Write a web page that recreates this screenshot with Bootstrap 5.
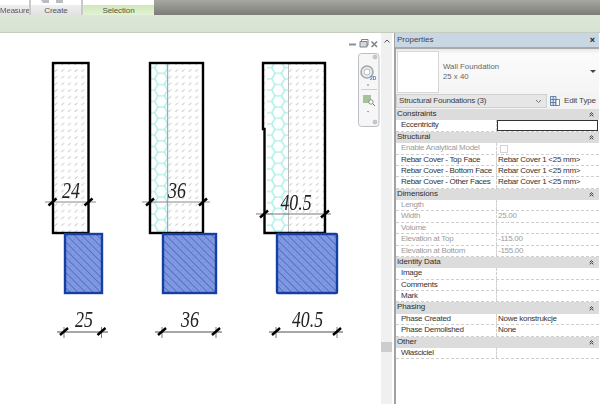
<!DOCTYPE html>
<html lang="en">
<head>
<meta charset="utf-8">
<title>Wall Foundation</title>
<link href="https://cdn.jsdelivr.net/npm/bootstrap@5.3.0/dist/css/bootstrap.min.css" rel="stylesheet">
<style>
html,body{width:600px;height:404px;overflow:hidden;background:#fff}
body{font:8px/1 "Liberation Sans",Arial,sans-serif;color:#333}
.shot{width:600px;height:404px;filter:blur(.3px)}
.ribbon{height:15px;background:linear-gradient(#a8a8a2,#7c7d77)}
.rtab{position:relative;height:15px;background:linear-gradient(#fff 0,#fff 5px,#eeeeee 5px,#e2e2e2 100%);border-right:2px solid #c9c9c9;color:#555;font-size:8px;padding-top:7px;text-align:center;letter-spacing:-.1px}
.rtab-m{width:31px;white-space:nowrap;overflow:hidden;font-size:7.8px}
.rtab-c{width:52px}
.rtab-s{width:71px;background:linear-gradient(#fff 0,#fff 5px,#cfe8b8 5px,#e4f2d6 100%);border-right:0;color:#4c5a44}
.rglyph{position:absolute;left:9px;top:0}
.band{height:18px;background:linear-gradient(#dde7d8,#d8e2d2);border-bottom:1px solid #c4cdbf}
.workarea{height:371px}
.canvas-pane{width:381px;height:371px}
.canvas-pane svg{display:block}
.vscroll{width:11px;background:#f0f0f0;padding-top:6px}
.vscroll svg{display:block;margin:0 auto 299px}
.vthumb{height:10px;background:#cdcdcd}
.props{width:208px;padding-left:3px;padding-right:1px}
.props-inner{height:371px;border-left:2px solid #a2a2a2;margin-left:-1px}
.ptitle{height:14px;background:#c9d6e4;color:#3a4656;font-size:8px;padding:0 4px 0 2px;margin-left:-1px}
.ptitle b{font-size:9px;font-weight:700;color:#222}
.ptype{height:46px;background:linear-gradient(#e8e8e8 0,#fbfbfb 5px,#f5f5f5 100%);padding:2px 3px 1px 1px;border-top:2px solid #a9a9a9}
.pthumb{width:42px;height:42px;background:#fff;border:1px solid #d6d6d6}
.pname{color:#666;font-size:7.8px;line-height:10px;margin-left:4px}
.pcaret{width:0;height:0;border:3px solid transparent;border-top:3px solid #444;margin-top:3px}
.psel{height:16px;padding-right:2px;background:#f3f3f3}
.pcombo{width:151px;height:14px;background:#e6e6e6;border:1px solid #d0d0d0;padding:0 4px 0 2px;font-size:8px;letter-spacing:-.2px;color:#3c3c3c;white-space:nowrap}
.pedit{font-size:8px;letter-spacing:-.15px;color:#444;gap:4px;padding-left:3px;white-space:nowrap}
.prow{height:11.38px;background:#fff;border-bottom:1px dashed #cfcfcf;line-height:10.4px;overflow:hidden;letter-spacing:-.28px}
.phead{background:#dcdcdc;border-bottom:0;padding:0 5px 0 1px;color:#2e2e2e;font-size:8px;letter-spacing:-.1px}
.pkey{width:101px;padding-left:5px;border-right:1px dashed #cfcfcf;white-space:nowrap;overflow:hidden;color:#333}
.pval{flex:1;padding-left:1px;white-space:nowrap;overflow:hidden;color:#333}
.off .pkey,.off .pval{color:#9b9b9b}
.pinput{flex:1;border:1px solid #333;height:11px;background:#fff;margin-right:1px}
.pcheck{display:block;width:8px;height:8px;border:1px solid #d4d4d4;margin:2px 0 0 2px}
.dimtxt{font-family:"Liberation Serif",serif;font-style:italic;font-size:23px;fill:#222}
.tick{stroke:#000;stroke-width:2.4}
.navtag{font:700 5px "Liberation Sans",sans-serif;fill:#4f80bd}
</style>
</head>
<body>
<svg width="0" height="0" class="d-block position-absolute">
  <symbol id="chev" viewBox="0 0 7 7"><path d="M1 3.2 3.5 1 6 3.2M1 6 3.5 3.8 6 6" fill="none" stroke="#222" stroke-width="1.2"/></symbol>
</svg>
<div class="shot d-flex flex-column">
  <div class="ribbon d-flex">
    <div class="rtab rtab-m">Measure</div>
    <div class="rtab rtab-c"><svg class="rglyph" width="26" height="4" viewBox="0 0 26 4"><path d="M1 0H9V3H3ZM16 0H23V3H16Z" fill="#b9bcc0"/></svg>Create</div>
    <div class="rtab rtab-s">Selection</div>
  </div>
  <div class="band"></div>
  <div class="workarea d-flex">
    <div class="canvas-pane">
      <svg width="381" height="371" viewBox="0 33 381 371" xmlns="http://www.w3.org/2000/svg">
        <defs>
          <pattern id="dash" width="6.7" height="6.7" patternUnits="userSpaceOnUse" x="53">
            <path d="M1.8 4.700 4.200 2.300" stroke="#a0a0a0" stroke-width=".8" fill="none"/>
          </pattern>
          <pattern id="hex" width="19.5" height="11.26" patternUnits="userSpaceOnUse" x="154.7" y="62">
            <path d="M0 5.63 3.25 0H9.75L13 5.63 9.75 11.26H3.25ZM13 5.63H19.5" fill="none" stroke="#8fe9e0" stroke-width="1.100"/>
          </pattern>
          <pattern id="ground" width="5.4" height="5.4" patternUnits="userSpaceOnUse" patternTransform="rotate(45)">
            <rect width="5.4" height="5.4" fill="#8099e3"/>
            <path d="M0 .5H5.4" stroke="#4a62b4" stroke-width=".75"/>
            <path d="M0 3.2H1.6" stroke="#6a80c8" stroke-width=".6"/>
          </pattern>
        </defs>

        <!-- wall 1 -->
        <rect x="53" y="63" width="35.5" height="170" fill="url(#dash)" stroke="#000" stroke-width="2.4"/>
        <rect x="65" y="234" width="37" height="59" fill="url(#ground)" stroke="#1440a6" stroke-width="2.4"/>
        <path d="M45 202H96" stroke="#8a8a8a"/>
        <text class="dimtxt" x="71" y="198" text-anchor="middle" textLength="18" lengthAdjust="spacingAndGlyphs">24</text>
        <path class="tick" d="M48.500 205.500 56.500 198.500M84.500 205.500 92.500 198.500"/>
        <path d="M57 332H108" stroke="#222" stroke-width=".8"/>
        <path d="M64 327V338M101.500 327V338" stroke="#222" stroke-width=".6"/>
        <path class="tick" d="M60 335 68 328M97.500 335 105.500 328"/>
        <text class="dimtxt" x="84" y="327" text-anchor="middle" textLength="18" lengthAdjust="spacingAndGlyphs">25</text>

        <!-- wall 2 -->
        <rect x="150" y="63" width="18" height="170" fill="url(#hex)"/>
        <rect x="168" y="63" width="35" height="170" fill="url(#dash)"/>
        <path d="M167.700 63V233" stroke="#8d9a9a"/>
        <rect x="150" y="63" width="53" height="170" fill="none" stroke="#000" stroke-width="2.400"/>
        <rect x="163" y="234" width="53" height="59" fill="url(#ground)" stroke="#1440a6" stroke-width="2.400"/>
        <path d="M142 202H210" stroke="#8a8a8a"/>
        <text class="dimtxt" x="177" y="198" text-anchor="middle" textLength="18" lengthAdjust="spacingAndGlyphs">36</text>
        <path class="tick" d="M146 205.500 154 198.500M199 205.500 207 198.500"/>
        <path d="M155 332H222" stroke="#222" stroke-width=".8"/>
        <path d="M162 327V338M216 327V338" stroke="#222" stroke-width=".6"/>
        <path class="tick" d="M158 335 166 328M212 335 220 328"/>
        <text class="dimtxt" x="190" y="327" text-anchor="middle" textLength="18" lengthAdjust="spacingAndGlyphs">36</text>

        <!-- wall 3 -->
        <rect x="263" y="63" width="4" height="66" fill="url(#dash)"/>
        <rect x="267" y="63" width="21" height="170" fill="url(#hex)"/>
        <rect x="289" y="63" width="36" height="170" fill="url(#dash)"/>
        <path d="M288.500 63V233" stroke="#bcbcbc"/>
        <path d="M263 129V63H325V233H264.500V129Z" fill="none" stroke="#000" stroke-width="2.400"/>
        <rect x="277" y="234" width="60" height="59" rx="1" fill="url(#ground)" stroke="#1440a6" stroke-width="2.400"/>
        <path d="M256 214H331" stroke="#555" stroke-width=".8"/>
        <text class="dimtxt" x="296" y="210" text-anchor="middle" textLength="31" lengthAdjust="spacingAndGlyphs">40.5</text>
        <path class="tick" d="M260 217.500 268 210.500M321 217.500 329 210.500"/>
        <path d="M269 332H343" stroke="#222" stroke-width=".8"/>
        <path d="M276 327V338M337 327V338" stroke="#222" stroke-width=".6"/>
        <path class="tick" d="M272 335 280 328M333 335 341 328"/>
        <text class="dimtxt" x="307.500" y="327" text-anchor="middle" textLength="31" lengthAdjust="spacingAndGlyphs">40.5</text>

        <!-- view controls -->
        <path d="M349 44.500H356" stroke="#8a9298" stroke-width="2"/>
        <path d="M360 41.500H367V47H360Z" fill="#d4d8da" stroke="#7d868c"/>
        <path d="M361.500 41V39.500H368V45.500H367" fill="none" stroke="#7d868c"/>
        <path d="M371.500 41.500 377 47M377 41.500 371.500 47" stroke="#7d868c" stroke-width="1.600"/>

        <!-- navigation bar -->
        <rect x="358.500" y="53.500" width="20.500" height="73" rx="3" fill="#f6f6f6" stroke="#b9bfc4"/>
        <circle cx="375" cy="57" r="2" fill="#c8c8c8" stroke="#aaa" stroke-width=".5"/>
        <circle cx="375" cy="122" r="2" fill="#c8c8c8" stroke="#aaa" stroke-width=".5"/>
        <circle cx="367" cy="72" r="6" fill="#ececec" stroke="#a4aaa8" stroke-width="1.600"/>
        <circle cx="367" cy="72" r="3" fill="#fff" stroke="#b8bcba"/>
        <text class="navtag" x="370" y="80">2D</text>
        <path d="M367 84.500 369 84.500 368 86Z" fill="#666"/>
        <path d="M361 89.500H377" stroke="#cfcfcf"/>
        <rect x="363" y="95" width="8" height="8" fill="#a5c39a"/>
        <circle cx="371" cy="102" r="2.200" fill="#fff" stroke="#777" stroke-width=".8"/>
        <path d="M372.500 103.500 375 106" stroke="#777"/>
        <path d="M367 111 369 111 368 112.500Z" fill="#777"/>
      </svg>
    </div>
    <div class="vscroll">
      <svg width="6" height="4" viewBox="0 0 6 4"><path d="M.5 3.500 3 1 5.500 3.500" fill="none" stroke="#555"/></svg>
      <div class="vthumb"></div>
    </div>
    <div class="props">
      <div class="props-inner">
        <div class="ptitle d-flex justify-content-between align-items-center"><span>Properties</span><b>×</b></div>
        <div class="ptype d-flex">
          <div class="pthumb"></div>
          <div class="pname flex-grow-1 align-self-center"><div>Wall Foundation</div><div>25 x 40</div></div>
          <div class="pcaret align-self-center"></div>
        </div>
        <div class="psel d-flex align-items-center">
          <div class="pcombo d-flex justify-content-between align-items-center"><span>Structural Foundations (3)</span>
            <svg width="7" height="5" viewBox="0 0 7 5"><path d="M1 1 3.500 3.500 6 1" fill="none" stroke="#777"/></svg></div>
          <div class="pedit d-flex align-items-center">
            <svg width="10" height="10" viewBox="0 0 10 10"><path d="M.5 .5H6V9.500H.5ZM.5 3.500H6M.5 6.500H6M3.200 .5V9.500" fill="#dbe7f4" stroke="#4c6f96" stroke-width=".8"/><path d="M6 3.500H9.500V9.500H6Z" fill="#fff" stroke="#4c6f96" stroke-width=".8"/></svg>
            <span>Edit Type</span>
          </div>
        </div>
        <div class="prow phead d-flex justify-content-between"><span>Constraints</span><svg width="5" height="5" class="align-self-center"><use href="#chev"/></svg></div>
        <div class="prow d-flex"><div class="pkey">Eccentricity</div><div class="pinput"></div></div>
        <div class="prow phead d-flex justify-content-between"><span>Structural</span><svg width="5" height="5" class="align-self-center"><use href="#chev"/></svg></div>
        <div class="prow off d-flex"><div class="pkey">Enable Analytical Model</div><div class="pval"><span class="pcheck"></span></div></div>
        <div class="prow d-flex"><div class="pkey">Rebar Cover - Top Face</div><div class="pval">Rebar Cover 1 &lt;25 mm&gt;</div></div>
        <div class="prow d-flex"><div class="pkey">Rebar Cover - Bottom Face</div><div class="pval">Rebar Cover 1 &lt;25 mm&gt;</div></div>
        <div class="prow d-flex"><div class="pkey">Rebar Cover - Other Faces</div><div class="pval">Rebar Cover 1 &lt;25 mm&gt;</div></div>
        <div class="prow phead d-flex justify-content-between"><span>Dimensions</span><svg width="5" height="5" class="align-self-center"><use href="#chev"/></svg></div>
        <div class="prow off d-flex"><div class="pkey">Length</div><div class="pval"></div></div>
        <div class="prow off d-flex"><div class="pkey">Width</div><div class="pval">25.00</div></div>
        <div class="prow off d-flex"><div class="pkey">Volume</div><div class="pval"></div></div>
        <div class="prow off d-flex"><div class="pkey">Elevation at Top</div><div class="pval">-115.00</div></div>
        <div class="prow off d-flex"><div class="pkey">Elevation at Bottom</div><div class="pval">-155.00</div></div>
        <div class="prow phead d-flex justify-content-between"><span>Identity Data</span><svg width="5" height="5" class="align-self-center"><use href="#chev"/></svg></div>
        <div class="prow d-flex"><div class="pkey">Image</div><div class="pval"></div></div>
        <div class="prow d-flex"><div class="pkey">Comments</div><div class="pval"></div></div>
        <div class="prow d-flex"><div class="pkey">Mark</div><div class="pval"></div></div>
        <div class="prow phead d-flex justify-content-between"><span>Phasing</span><svg width="5" height="5" class="align-self-center"><use href="#chev"/></svg></div>
        <div class="prow d-flex"><div class="pkey">Phase Created</div><div class="pval">Nowe konstrukcje</div></div>
        <div class="prow d-flex"><div class="pkey">Phase Demolished</div><div class="pval">None</div></div>
        <div class="prow phead d-flex justify-content-between"><span>Other</span><svg width="5" height="5" class="align-self-center"><use href="#chev"/></svg></div>
        <div class="prow d-flex"><div class="pkey">Właściciel</div><div class="pval"></div></div>
      </div>
    </div>
  </div>
</div>
<script src="https://cdn.jsdelivr.net/npm/bootstrap@5.3.0/dist/js/bootstrap.bundle.min.js"></script>
</body>
</html>
